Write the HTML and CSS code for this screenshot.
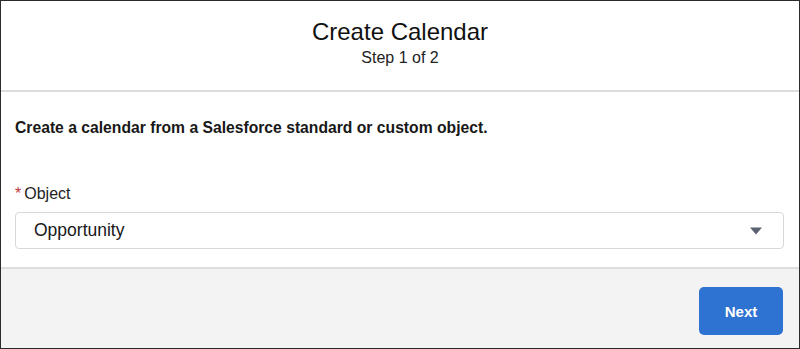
FILE: index.html
```html
<!DOCTYPE html>
<html lang="en">

<head>
    <meta charset="UTF-8">
    <meta name="viewport" content="width=device-width, initial-scale=1.0">
    <title>Create Calendar</title>
    <link rel="stylesheet" href="styles.css">
</head>

<body>
    <div class="modal">
        <div class="modal-header">
            <h2 class="modal-title">Create Calendar</h2>
            <p class="modal-step">Step 1 of 2</p>
        </div>

        <div class="modal-body">
            <p class="intro">Create a calendar from a Salesforce standard or custom object.</p>

            <div class="field">
                <label class="field-label" for="objectSelect"><abbr class="required" title="required">*</abbr>Object</label>
                <div class="select-box" id="objectSelect">
                    <span class="select-value">Opportunity</span>
                    <svg class="select-arrow" width="14" height="10" viewBox="0 0 14 10">
                        <path d="M1 1.5 L13 1.5 L7 8.5 Z" fill="#5b6272"/>
                    </svg>
                </div>
            </div>
        </div>

        <div class="modal-footer">
            <button class="btn-next">Next</button>
        </div>
    </div>
</body>

</html>
```

FILE: styles.css
```css
html,
body {
    margin: 0;
    padding: 0;
    height: 100%;
}

body {
    font-family: "Liberation Sans", Arial, sans-serif;
    color: #181818;
    background-color: #ffffff;
}

.modal {
    box-sizing: border-box;
    height: 349px;
    border: 1px solid #2b2b2b;
    display: flex;
    flex-direction: column;
}

.modal-header {
    height: 91px;
    box-sizing: border-box;
    border-bottom: 2px solid #dcdcdc;
    text-align: center;
    padding-top: 17px;
}

.modal-title {
    margin: 0;
    font-size: 24px;
    font-weight: normal;
    line-height: 28px;
    color: #111;
}

.modal-step {
    margin: 0;
    font-size: 16px;
    line-height: 24px;
    color: #222;
}

.modal-body {
    height: 177px;
    box-sizing: border-box;
    border-bottom: 2px solid #dddddd;
    padding: 25px 15px 0 14px;
}

.intro {
    margin: 0;
    font-size: 15.7px;
    font-weight: bold;
    line-height: 22px;
}

.field {
    margin-top: 45px;
}

.field-label {
    display: block;
    font-size: 16px;
    line-height: 20px;
    margin-bottom: 8px;
    color: #222;
}

.required {
    text-decoration: none;
    color: #c23934;
    margin-right: 3px;
}

.select-box {
    display: flex;
    align-items: center;
    justify-content: space-between;
    height: 37px;
    box-sizing: border-box;
    border: 1px solid #d8d8d8;
    border-radius: 4px;
    padding: 0 20px 0 18px;
    background-color: #fff;
}

.select-value {
    font-size: 17.5px;
    color: #181818;
}

.modal-footer {
    flex: 1;
    background-color: #f3f3f3;
    display: flex;
    justify-content: flex-end;
    align-items: flex-start;
    padding: 18px 16px 0 0;
}

.btn-next {
    width: 84px;
    height: 48px;
    border: 0;
    border-radius: 5px;
    background-color: #2e72d2;
    color: #fff;
    font-family: "Liberation Sans", Arial, sans-serif;
    font-size: 15px;
    font-weight: bold;
}
```
